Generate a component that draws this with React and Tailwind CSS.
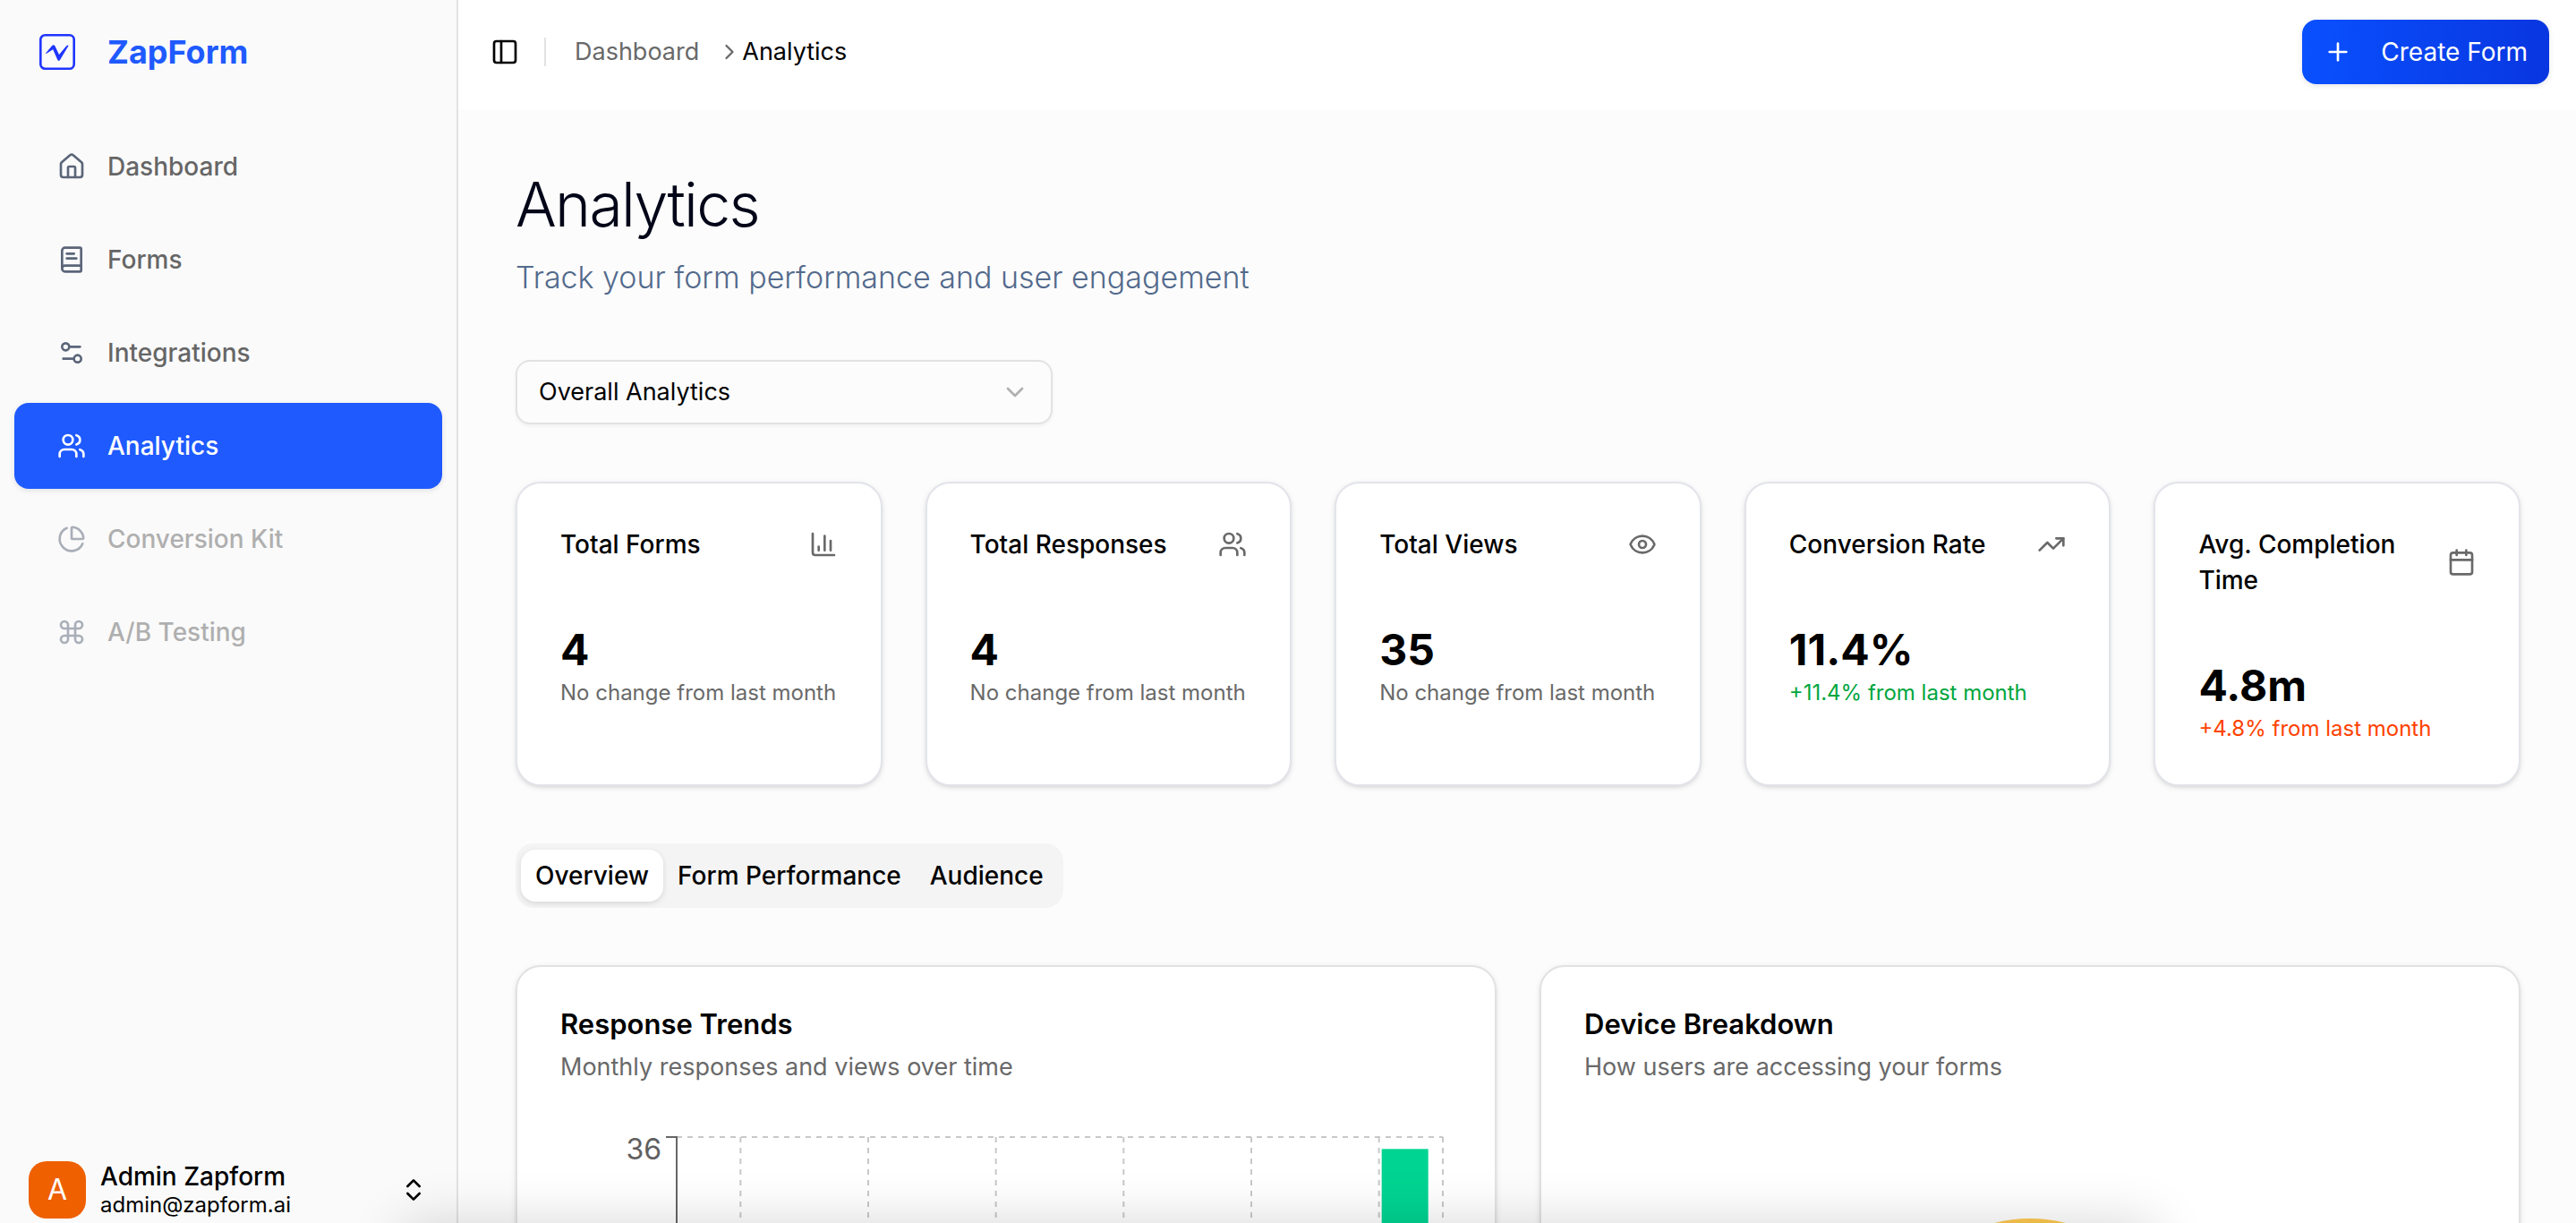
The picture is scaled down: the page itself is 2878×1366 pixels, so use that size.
import React, { useState } from 'react';
import {
    House,
    BookText,
    Settings2,
    Users,
    ChartPie,
    Command,
    ChevronsUpDown,
    ChevronRight,
    ChevronDown,
    PanelLeft,
    Plus,
    ChartColumn,
    Eye,
    TrendingUp,
    Calendar
} from 'lucide-react';

const navItems = [
    { label: 'Dashboard', icon: House },
    { label: 'Forms', icon: BookText },
    { label: 'Integrations', icon: Settings2 },
    { label: 'Analytics', icon: Users, active: true },
    { label: 'Conversion Kit', icon: ChartPie, disabled: true },
    { label: 'A/B Testing', icon: Command, disabled: true },
];

const stats = [
    { label: 'Total Forms', value: '4', note: 'No change from last month', icon: ChartColumn, color: 'text-[#696969]' },
    { label: 'Total Responses', value: '4', note: 'No change from last month', icon: Users, color: 'text-[#696969]' },
    { label: 'Total Views', value: '35', note: 'No change from last month', icon: Eye, color: 'text-[#696969]' },
    { label: 'Conversion Rate', value: '11.4%', note: '+11.4% from last month', icon: TrendingUp, color: 'text-[#00a63e]' },
    { label: 'Avg. Completion Time', value: '4.8m', note: '+4.8% from last month', icon: Calendar, color: 'text-[#ff4200]' },
];

const tabs = ['Overview', 'Form Performance', 'Audience'];

const trends = [
    { month: 'Jan', views: 0 },
    { month: 'Feb', views: 0 },
    { month: 'Mar', views: 0 },
    { month: 'Apr', views: 0 },
    { month: 'May', views: 0 },
    { month: 'Jun', views: 35 },
];

const Logo = () => (
    <svg viewBox="0 0 40 40" className="w-10 h-10" fill="none" aria-hidden="true">
        <rect x="1.3" y="1.3" width="37.4" height="37.4" rx="5" stroke="#1f35ff" strokeWidth="2.6" />
        <path d="M7 21.5 L14 13.2 Q16 11 17.5 13.4 L22 23 L30 13.4 Q31.6 12 32.6 13 L23 29 Q21.6 31 20.2 28.8 L15.2 17.2 L7.6 22 Z" fill="#1f35ff" />
    </svg>
);

const Sidebar = () => (
    <aside className="flex w-[512px] shrink-0 flex-col border-r-2 border-[#e2e2e2] bg-[#fafafa] px-4 pb-1">
        <div className="flex h-[138px] items-start gap-9 px-7 pt-9">
            <div className="flex h-11 items-center">
                <Logo />
            </div>
            <span className="text-[36px] leading-11 font-bold text-[#1f5aff]">ZapForm</span>
        </div>

        <nav className="flex flex-col gap-2">
            {navItems.map((item) => (
                <a
                    key={item.label}
                    href="#"
                    aria-disabled={item.disabled}
                    className={`flex h-24 items-center gap-6 rounded-2xl px-12 text-[28px] font-medium ${item.active ? 'bg-[#1f5aff] text-white shadow-[0_2px_6px_rgba(0,0,0,0.1)]' : 'text-[#666666]'} ${item.disabled ? 'opacity-50' : ''}`}
                >
                    <item.icon className={`w-8 h-8 ${item.active ? 'text-white' : 'text-[#5b6579]'}`} />
                    {item.label}
                </a>
            ))}
        </nav>

        <button type="button" className="mt-auto flex items-center gap-4 px-4 text-left">
            <span className="flex w-16 h-16 items-center justify-center rounded-[20px] bg-[#ee6000] text-[32px] text-white">A</span>
            <span className="flex flex-1 flex-col pt-0.5">
                <span className="text-[28px] leading-8 font-medium text-black">Admin Zapform</span>
                <span className="text-2xl leading-8 text-black">admin@zapform.ai</span>
            </span>
            <ChevronsUpDown className="w-8 h-8" />
        </button>
    </aside>
);

const Header = () => (
    <header className="flex h-[122px] shrink-0 items-start justify-between bg-white pt-[22px] pr-[30px] pl-9">
        <div className="flex h-18 items-center">
            <button type="button" aria-label="Toggle sidebar">
                <PanelLeft className="w-8 h-8" />
            </button>
            <div className="mx-7 h-8 w-0.5 bg-[#e2e2e2]" />
            <nav aria-label="Breadcrumb" className="flex items-center pl-1 text-[27px]">
                <a href="#" className="mr-5 text-[#696969]">Dashboard</a>
                <ChevronRight className="w-7 h-7 text-[#696969]" />
                <span>Analytics</span>
            </nav>
        </div>
        <button
            type="button"
            className="flex h-18 items-center gap-8 rounded-2xl bg-linear-to-r from-[#0a50ff] to-[#0936e0] px-6 text-[28px] text-white shadow-[0_2px_6px_rgba(0,0,0,0.1)]"
        >
            <Plus className="w-8 h-8" />
            Create Form
        </button>
    </header>
);

const StatCard = ({ stat }) => (
    <div className="rounded-[28px] border-2 border-[#e2e4ea] bg-white px-12 pt-12 pb-[46px] shadow-[0_2px_6px_rgba(0,0,0,0.1),0_2px_4px_-2px_rgba(0,0,0,0.1)]">
        <div className="flex items-center justify-between pb-[66px]">
            <h3 className="text-[28px] leading-10 font-medium">{stat.label}</h3>
            <stat.icon className="w-8 h-8 shrink-0 text-[#696969]" />
        </div>
        <p className="text-5xl leading-16 font-bold">{stat.value}</p>
        <p className={`text-2xl leading-8 whitespace-nowrap ${stat.color}`}>{stat.note}</p>
    </div>
);

const ChartCard = ({ title, description, children }) => (
    <section className="rounded-[28px] border-2 border-[#e2e2e2] bg-white p-12 shadow-[0_2px_6px_rgba(0,0,0,0.1),0_2px_4px_-2px_rgba(0,0,0,0.1)]">
        <h2 className="text-[31px] leading-8 font-semibold">{title}</h2>
        <p className="mt-3 mb-12 text-[27px] leading-10 text-[#696969]">{description}</p>
        {children}
    </section>
);

const TrendsChart = () => {
    const left = 130;
    const top = 10;
    const height = 480;
    const step = 856 / trends.length;
    const centers = trends.map((_, i) => left + step * (i + 0.5));

    return (
        <svg viewBox="0 0 996 600" className="block w-full">
            <g stroke="#c8c8c8" strokeWidth="2" strokeDasharray="6 6">
                <path d={`M${left} ${top}H986`} />
                {[...centers, 986].map((x) => (
                    <path key={x} d={`M${x} ${top}V${top + height}`} />
                ))}
            </g>
            <path d={`M${left - 12} ${top}H${left}V${top + height}`} fill="none" stroke="#666666" strokeWidth="2" />
            <text x="113" y="35" textAnchor="end" fontSize="32" fill="#5f5f5f">36</text>
            {trends.map((item, i) => {
                const barHeight = (item.views / 36) * height;
                return (
                    <rect key={item.month} x={centers[i] + 3} y={top + height - barHeight} width="52" height={barHeight} fill="#00d492" />
                );
            })}
        </svg>
    );
};

const DeviceChart = () => (
    <svg viewBox="0 0 996 600" className="block w-full">
        <circle cx="498" cy="261" r="120" fill="none" stroke="#ffc94f" strokeWidth="80" />
    </svg>
);

const App = () => {
    const [activeTab, setActiveTab] = useState('Overview');

    return (
        <div className="relative flex h-screen overflow-hidden bg-[#fcfcfc] font-['Inter',sans-serif] text-black">
            <Sidebar />

            <div className="flex min-w-0 flex-1 flex-col">
                <Header />

                <main className="flex flex-1 flex-col gap-16 overflow-hidden pt-16 pr-[62px] pl-16">
                    <div>
                        <h1 className="text-[68px] leading-21 font-light tracking-tight text-[#020618]">Analytics</h1>
                        <p className="mt-3 text-[34px] leading-14 font-light text-[#536a8c]">Track your form performance and user engagement</p>
                    </div>

                    {/* Form filter */}
                    <div className="relative w-[600px]">
                        <select
                            aria-label="Form"
                            className="block h-18 w-full appearance-none rounded-2xl border-2 border-[#e2e2e2] bg-transparent px-6 text-[27px] shadow-[0_2px_4px_rgba(0,0,0,0.05)]"
                        >
                            <option>Overall Analytics</option>
                        </select>
                        <ChevronDown className="pointer-events-none absolute top-5 right-[26px] w-8 h-8 text-[#b0b0b0]" />
                    </div>

                    {/* Stats */}
                    <div className="grid grid-cols-5 gap-12">
                        {stats.map((stat) => <StatCard key={stat.label} stat={stat} />)}
                    </div>

                    {/* Tabs */}
                    <div role="tablist" className="flex h-18 w-fit shrink-0 items-center rounded-[20px] bg-[#f4f4f4] p-1.5">
                        {tabs.map((tab) => (
                            <button
                                key={tab}
                                type="button"
                                role="tab"
                                aria-selected={activeTab === tab}
                                onClick={() => setActiveTab(tab)}
                                className={`h-[58px] rounded-2xl px-4 text-[28px] font-medium ${activeTab === tab ? 'bg-white shadow-[0_2px_6px_rgba(0,0,0,0.12)]' : ''}`}
                            >
                                {tab}
                            </button>
                        ))}
                    </div>

                    <div className="grid grid-cols-2 gap-12">
                        <ChartCard title="Response Trends" description="Monthly responses and views over time">
                            <TrendsChart />
                        </ChartCard>
                        <ChartCard title="Device Breakdown" description="How users are accessing your forms">
                            <DeviceChart />
                        </ChartCard>
                    </div>
                </main>
            </div>

            {/* Soft shade rising from the bottom edge */}
            <div className="pointer-events-none absolute top-full right-[470px] left-[450px] h-20 shadow-[0_0_60px_rgba(0,0,0,0.16)]" />
        </div>
    );
};

export default App;
